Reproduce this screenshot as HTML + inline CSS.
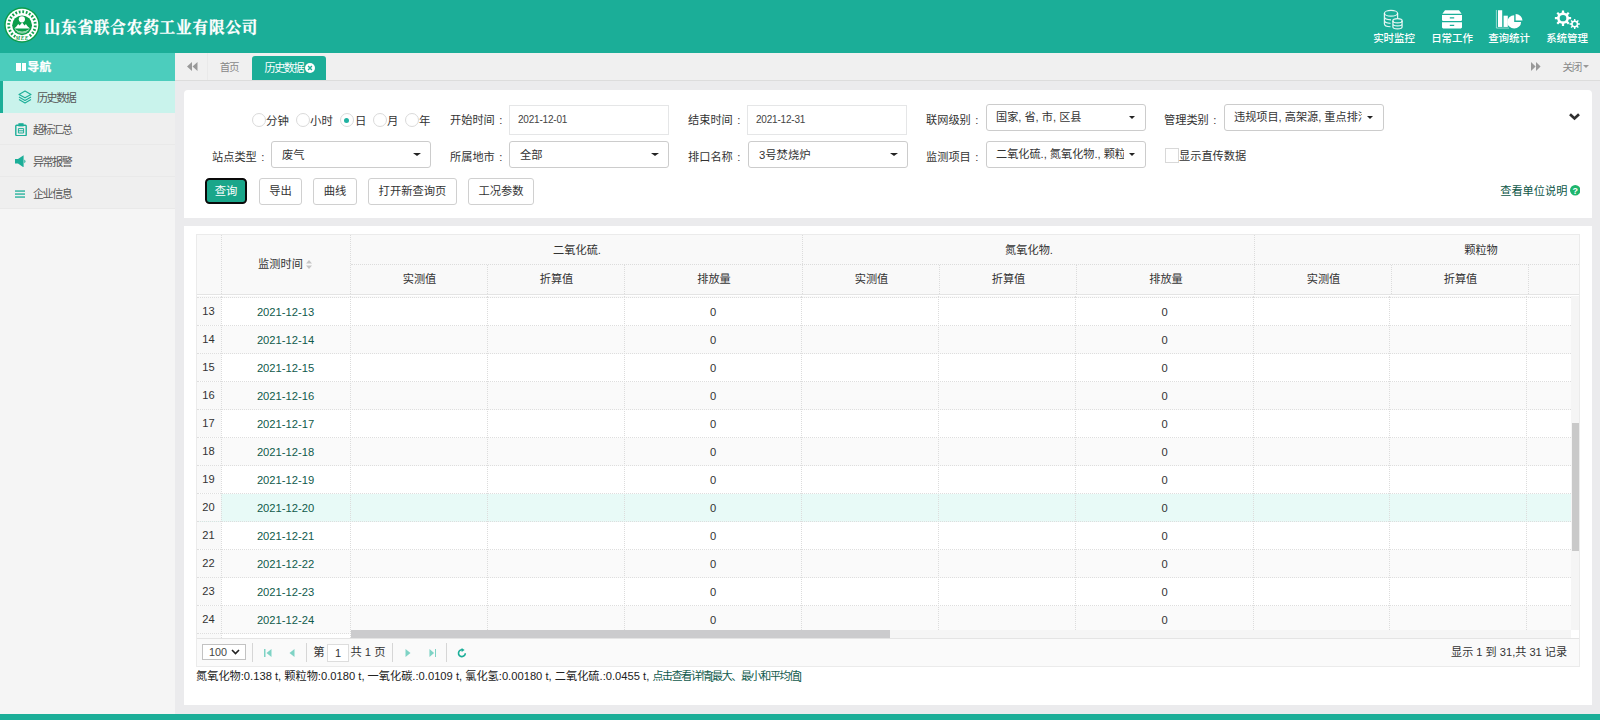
<!DOCTYPE html>
<html lang="zh-CN">
<head>
<meta charset="utf-8">
<title>历史数据</title>
<style>
*{box-sizing:border-box}
html,body{margin:0;padding:0}
body{width:1600px;height:720px;position:relative;overflow:hidden;background:#ebebed;font-family:"Liberation Sans","Noto Sans CJK SC",sans-serif;font-size:11.5px;color:#333}
.abs{position:absolute}
#hdr{position:absolute;left:0;top:0;width:1600px;height:53px;background:#1bae98}
#title{position:absolute;left:44.5px;top:15.6px;font-family:"Liberation Serif","Noto Serif CJK SC",serif;font-weight:700;font-size:15.6px;letter-spacing:.85px;-webkit-text-stroke:.3px #fff;color:#fff;line-height:24px;white-space:nowrap}
.tm{position:absolute;top:0;width:58px;height:53px;text-align:center;color:#fff}
.tm svg{position:absolute;top:9.3px;left:50%;margin-left:-14px;width:28px;height:21px}
.tm span{position:absolute;left:-10px;right:-10px;top:31px;font-size:10.5px;line-height:14px;font-weight:500;letter-spacing:-.1px;white-space:nowrap}
#side{position:absolute;left:0;top:53px;width:175px;height:661px;background:#f5f5f5}
#navh{position:absolute;left:0;top:0;width:175px;height:28px;background:#4ccdbd;color:#fff;font-weight:700;font-size:11px;line-height:28px}
.mi{position:absolute;left:0;width:175px;height:32px;background:#efefef;border-bottom:1px solid #e9e9e9;line-height:35px;font-size:11px;color:#555;letter-spacing:-1.4px}
.mi.on{background:#c9f3ec;border-left:3px solid #1bae98;border-bottom:none;line-height:35px}
.mi svg{position:absolute}
.mi span{position:absolute;left:33px;top:0;white-space:nowrap}
#tabs{position:absolute;left:175px;top:53px;width:1425px;height:28px;background:#f0f0f0;border-bottom:1px solid #dcdcdc}
.panel{position:absolute;left:184px;width:1408px;background:#fff}
.lb{position:absolute;font-size:11.2px;line-height:16px;white-space:nowrap;color:#333;margin-top:-.2px}
.lb b{font-weight:400;margin-left:4.5px}
.inp{position:absolute;height:30px;border:1px solid #e5e6e7;background:#fff;font-size:10px;letter-spacing:-.2px;line-height:28px;padding-left:8px;color:#444}
.sel{position:absolute;height:27px;border:1px solid #ccc;border-radius:3px;background:#fff;font-size:11.3px;line-height:26.5px;padding-left:10px;color:#333;white-space:nowrap;overflow:hidden}
.sel.ms{line-height:24.6px;font-size:11.15px;padding-left:9px}
.sel.ms i{border-left-width:3.3px;border-right-width:3.3px;border-top-width:3.5px;right:10px;top:11px}
.sel u{position:absolute;left:9px;top:0;width:127.5px;overflow:hidden;text-decoration:none;white-space:nowrap}
.sel i{position:absolute;right:9px;top:10.6px;width:0;height:0;border-left:4px solid transparent;border-right:4px solid transparent;border-top:3.8px solid #222}
.btn{position:absolute;top:88px;height:27px;border:1px solid #d0d0d0;border-radius:3px;background:#fff;font-size:11.3px;line-height:25px;text-align:center;color:#333;white-space:nowrap}
.rd{position:absolute;top:23.3px;width:14px;height:14px;border:1px solid #dadada;border-radius:50%;background:#fff;margin-left:-.5px}
.rd.on::after{content:"";position:absolute;left:3.5px;top:3.5px;width:5px;height:5px;border-radius:50%;background:#20b2a2}
/* grid */
#grid{position:absolute;left:12px;top:8px;width:1384px;height:433px;border:1px solid #ebebeb;background:#fff}
#gh{position:absolute;left:0;top:0;width:1382px;height:60px;background:#f9f9f9;border-bottom:1.5px solid #e4e4e4}
.hc{position:absolute;font-size:11.2px;text-align:center;color:#333;line-height:16px;white-space:nowrap}
.vl{position:absolute;width:0;border-left:1px dotted #dcdcdc}
.hl_{position:absolute;height:0;border-top:1px dotted #dcdcdc}
#gb{position:absolute;left:0;top:61px;width:1374px;height:342px;overflow:hidden;background:#fff}
.r{position:absolute;left:0;width:1374px;height:28px;border-bottom:1px dotted #dedede;background:#fff;line-height:28.6px;font-size:11.2px}
.r.alt{background:#fafafa}
.r.hl{background:#e8faf7}
.r span{position:absolute;top:0;text-align:center}
.r .rn{left:0;width:24px;padding-right:1px;background:#f9f9f9;height:27px;color:#333;line-height:26.8px;font-size:11.1px}
.r .dt{left:24px;width:129px;color:#105a4c}
.r .z1{left:427px;width:178px}
.r .z2{left:878.5px;width:178px}
</style>
</head>
<body>
<div id="hdr">
  <svg class="abs" style="left:4px;top:6.5px" width="36" height="36" viewBox="0 0 36 36">
    <circle cx="18" cy="18" r="17.7" fill="#0b9d49"/>
    <circle cx="18" cy="18" r="16.3" fill="#fff"/>
    <circle cx="18" cy="18" r="13.3" fill="none" stroke="#12a04d" stroke-width="2.8" transform="rotate(120 18 18)" pathLength="100" stroke-dasharray="2.1 2.1 2.1 2.1 2.1 2.1 2.1 2.1 2.1 2.1 2.1 2.1 2.1 2.1 2.1 2.1 2.1 2.1 2.1 2.1 2.1 2.1 2.1 2.1 2.1 2.1 2.1 2.1 2.1 2.1 2.1 2.1 2.1 2.1 2.1 2.1 2.1 2.1 2.1 18.1"/>
    <circle cx="18.1" cy="18.3" r="9.9" fill="#0b9d49"/>
    <circle cx="17.9" cy="12.3" r="3.1" fill="#fff"/>
    <path d="M10.2 21.4 L12.4 19.4 L14.2 16.9 L15.6 18.5 L18.2 15.4 L20.5 18.5 L21.9 16.9 L23.7 19.4 L26 21.4 Z" fill="#fff"/>
    <path d="M11 22.6 Q18 27.5 25.2 22.6 M12.8 24.4 Q18 27.8 23.4 24.4" fill="none" stroke="#d9f3e2" stroke-width=".9" opacity=".85"/>
    <text x="18.2" y="32.7" font-family="Liberation Serif,serif" font-size="5.2" font-weight="700" font-style="italic" fill="#0b9d49" text-anchor="middle" letter-spacing=".6">MEE</text>
  </svg>
  <div id="title">山东省联合农药工业有限公司</div>

  <div class="tm" style="left:1365px">
    <svg viewBox="0 0 28 22" preserveAspectRatio="none" fill="none" stroke="#fff" stroke-width="1.25" stroke-opacity=".88" style="margin-left:-15.2px">
      <ellipse cx="12" cy="4.5" rx="6.6" ry="3"/>
      <path d="M5.4 4.5 V15.5 C5.4 17.3 8.2 18.6 11.5 18.6 M18.6 4.5 V9.5 M5.4 8.2 C5.4 10 8.2 11.3 12 11.3 M5.4 11.9 C5.4 13.7 8.2 15 11.5 15"/>
      <ellipse cx="18.5" cy="12.3" rx="4.6" ry="2.2"/>
      <path d="M13.9 12.3 V18.5 C13.9 19.8 15.9 20.8 18.5 20.8 C21.1 20.8 23.1 19.8 23.1 18.5 V12.3 M13.9 15.4 C13.9 16.7 15.9 17.7 18.5 17.7 C21.1 17.7 23.1 16.7 23.1 15.4"/>
    </svg>
    <span>实时监控</span>
  </div>
  <div class="tm" style="left:1423px">
    <svg viewBox="0 0 28 22" preserveAspectRatio="none" fill="#fff">
      <path d="M7 1.3 H21 L23.6 5 H4.4 Z"/>
      <path d="M4 6.2 H24 V11.4 Q24 12.6 22.8 12.6 H5.2 Q4 12.6 4 11.4 Z M11.8 8.6 V9.9 H16.2 V8.6 Z" fill-rule="evenodd"/>
      <path d="M4 14 H24 V19.2 Q24 20.4 22.8 20.4 H5.2 Q4 20.4 4 19.2 Z M11.8 16.4 V17.7 H16.2 V16.4 Z" fill-rule="evenodd"/>
    </svg>
    <span>日常工作</span>
  </div>
  <div class="tm" style="left:1480px">
    <svg viewBox="0 0 28 22" preserveAspectRatio="none" fill="#fff">
      <path d="M1.4 1 V20 H14" fill="none" stroke="#fff" stroke-width=".7" opacity=".8"/>
      <rect x="3" y="1.3" width="4.2" height="17.5"/>
      <rect x="8.6" y="7" width="4.2" height="11.8"/>
      <path d="M19.2 6.6 A6.9 6.9 0 1 0 26.1 13.5 H19.2 Z"/>
      <path d="M20.6 5.2 A6.9 6.9 0 0 1 27.5 12.1 H20.6 Z"/>
    </svg>
    <span>查询统计</span>
  </div>
  <div class="tm" style="left:1538px">
    <svg viewBox="0 0 28 22" preserveAspectRatio="none" fill="none" stroke="#fff">
      <path d="M15.88 8.43 L18.13 8.51 L18.13 10.69 L15.88 10.77 L14.99 12.93 L16.52 14.57 L14.97 16.12 L13.33 14.59 L11.17 15.48 L11.09 17.73 L8.91 17.73 L8.83 15.48 L6.67 14.59 L5.03 16.12 L3.48 14.57 L5.01 12.93 L4.12 10.77 L1.87 10.69 L1.87 8.51 L4.12 8.43 L5.01 6.27 L3.48 4.63 L5.03 3.08 L6.67 4.61 L8.83 3.72 L8.91 1.47 L11.09 1.47 L11.17 3.72 L13.33 4.61 L14.97 3.08 L16.52 4.63 L14.99 6.27 Z M13.30 9.60 A3.3 3.3 0 1 0 6.70 9.60 A3.3 3.3 0 1 0 13.30 9.60 Z" fill="#fff" fill-rule="evenodd" stroke="none"/>
      <path d="M25.33 14.98 L26.85 15.01 L26.85 16.39 L25.33 16.42 L24.78 17.76 L25.83 18.85 L24.85 19.83 L23.76 18.78 L22.42 19.33 L22.39 20.85 L21.01 20.85 L20.98 19.33 L19.64 18.78 L18.55 19.83 L17.57 18.85 L18.62 17.76 L18.07 16.42 L16.55 16.39 L16.55 15.01 L18.07 14.98 L18.62 13.64 L17.57 12.55 L18.55 11.57 L19.64 12.62 L20.98 12.07 L21.01 10.55 L22.39 10.55 L22.42 12.07 L23.76 12.62 L24.85 11.57 L25.83 12.55 L24.78 13.64 Z M23.70 15.70 A2.0 2.0 0 1 0 19.70 15.70 A2.0 2.0 0 1 0 23.70 15.70 Z" fill="#fff" fill-rule="evenodd" stroke="none"/>
    </svg>
    <span>系统管理</span>
  </div>
</div>

<div id="side">
  <div id="navh">
    <span class="abs" style="left:16px;top:10px;width:10px;height:8px;background:#fff"></span>
    <span class="abs" style="left:20.6px;top:10px;width:.8px;height:8px;background:#4ccdbd"></span>
    <span class="abs" style="left:27.6px;top:0;letter-spacing:.3px;font-size:11.6px;-webkit-text-stroke:.25px #fff">导航</span>
  </div>
  <div class="mi on" style="top:28px">
    <svg style="left:14.6px;top:9.4px" width="14" height="14.4" viewBox="0 0 14 14" preserveAspectRatio="none" fill="none" stroke="#1bae98" stroke-width="1.1" stroke-linejoin="round"><path d="M7 1 L13 4.3 L7 7.6 L1 4.3 Z"/><path d="M1 6.8 L7 10.1 L13 6.8 M1 9.3 L7 12.6 L13 9.3"/></svg>
    <span style="left:34px">历史数据</span>
  </div>
  <div class="mi" style="top:60px">
    <svg style="left:15px;top:9.6px" width="12" height="13.4" viewBox="0 0 12 13.4" fill="none" stroke="#1bae98" stroke-width="1.4"><rect x=".8" y="2.3" width="10.4" height="10.3" rx=".8"/><path d="M3.4 .2 H8.6 V3.4 H3.4 Z" fill="#1bae98" stroke="none"/><path d="M3.4 5.6 H8.6 V10 H3.4 Z M3.4 7.8 H8.6" stroke-width="1"/></svg>
    <span>超标汇总</span>
  </div>
  <div class="mi" style="top:92px">
    <svg style="left:15px;top:9.8px" width="12" height="12.6" viewBox="0 0 12 12" preserveAspectRatio="none" fill="#1bae98"><path d="M0 3.8 H3 L8.6 0.2 V11.8 L3 8.2 H0 Z"/><path d="M9.3 4.2 Q11.8 6 9.3 7.8 Z"/></svg>
    <span>异常报警</span>
  </div>
  <div class="mi" style="top:124px">
    <svg style="left:15px;top:13px" width="11" height="9" viewBox="0 0 11 9" fill="#1bae98"><rect y=".4" width="10" height="1.3"/><rect y="3.4" width="10" height="1.3"/><rect y="6.4" width="10" height="1.3"/></svg>
    <span>企业信息</span>
  </div>
</div>

<div id="tabs">
  <div class="abs" style="left:0;top:0;width:33px;height:27px;border-right:1px solid #e9e9e9"></div>
  <svg class="abs" style="left:12px;top:9px" width="11" height="9" viewBox="0 0 11 9" fill="#999"><path d="M5 0 V9 L0 4.5 Z M10.5 0 V9 L5.5 4.5 Z"/></svg>
  <div class="abs" style="left:44.7px;top:0;font-size:10.5px;line-height:29.6px;color:#888;letter-spacing:-1.1px">首页</div>
  <div class="abs" style="left:77px;top:3px;width:74px;height:24px;background:#1bae98;border-radius:3px 3px 0 0;color:#fff;font-size:11px;line-height:25px;letter-spacing:-1.35px"><span class="abs" style="left:12.5px;top:0;white-space:nowrap">历史数据</span>
    <svg class="abs" style="left:53.3px;top:7.4px" width="10" height="10" viewBox="0 0 9 9"><circle cx="4.5" cy="4.5" r="4.5" fill="#fff"/><path d="M2.8 2.8 L6.2 6.2 M6.2 2.8 L2.8 6.2" stroke="#1bae98" stroke-width="1.3"/></svg>
  </div>
  <svg class="abs" style="left:1356px;top:9px" width="10" height="9" viewBox="0 0 10 9" fill="#999"><path d="M0 0 V9 L4.6 4.5 Z M5 0 V9 L9.6 4.5 Z"/></svg>
  <div class="abs" style="left:1387.5px;top:0;font-size:10.6px;line-height:29.4px;color:#888;letter-spacing:-1.3px">关闭</div>
  <span class="abs" style="left:1408.3px;top:12px;width:0;height:0;border-left:3.3px solid transparent;border-right:3.3px solid transparent;border-top:3.5px solid #999"></span>
</div>

<!-- filter panel -->
<div class="panel" style="top:90px;height:128px;border-radius:4px 4px 0 0">
  <span class="rd" style="left:68px"></span><span class="lb" style="left:82px;top:23.2px;font-size:11.4px">分钟</span>
  <span class="rd" style="left:112px"></span><span class="lb" style="left:126px;top:23.2px;font-size:11.4px">小时</span>
  <span class="rd on" style="left:156px"></span><span class="lb" style="left:171px;top:23.2px;font-size:11.4px">日</span>
  <span class="rd" style="left:189px"></span><span class="lb" style="left:203px;top:23.2px;font-size:11.4px">月</span>
  <span class="rd" style="left:221px"></span><span class="lb" style="left:235px;top:23.2px;font-size:11.4px">年</span>

  <span class="lb" style="left:266px;top:22px">开始时间<b>:</b></span>
  <div class="inp" style="left:325px;top:15px;width:160px">2021-12-01</div>
  <span class="lb" style="left:504px;top:22px">结束时间<b>:</b></span>
  <div class="inp" style="left:563px;top:15px;width:160px">2021-12-31</div>
  <span class="lb" style="left:742px;top:22px">联网级别<b>:</b></span>
  <div class="sel ms" style="left:802px;top:14px;width:160px">国家, 省, 市, 区县<i></i></div>
  <span class="lb" style="left:980px;top:22px">管理类别<b>:</b></span>
  <div class="sel ms" style="left:1040px;top:14px;width:160px"><u>违规项目, 高架源, 重点排污</u><i></i></div>

  <span class="lb" style="left:28px;top:59px">站点类型<b>:</b></span>
  <div class="sel" style="left:87px;top:51px;width:160px">废气<i></i></div>
  <span class="lb" style="left:266px;top:59px">所属地市<b>:</b></span>
  <div class="sel" style="left:325px;top:51px;width:160px">全部<i></i></div>
  <span class="lb" style="left:504px;top:59px">排口名称<b>:</b></span>
  <div class="sel" style="left:564px;top:51px;width:160px">3号焚烧炉<i></i></div>
  <span class="lb" style="left:742px;top:59px">监测项目<b>:</b></span>
  <div class="sel ms" style="left:802px;top:51px;width:160px"><u>二氧化硫., 氮氧化物., 颗粒物</u><i></i></div>
  <span class="abs" style="left:981px;top:58px;width:14px;height:14.6px;border:1px solid #d8d8d8;background:#fff"></span>
  <span class="lb" style="left:995px;top:58px;font-size:11.2px">显示直传数据</span>

  <div class="btn" style="left:21.2px;top:88.3px;width:41.8px;height:26.2px;background:#1aa68a;color:#fff;border:2px solid #0a0a0a;border-radius:4.5px;line-height:22.4px">查询</div>
  <div class="btn" style="left:75px;width:43px">导出</div>
  <div class="btn" style="left:129px;width:44px">曲线</div>
  <div class="btn" style="left:184px;width:89px">打开新查询页</div>
  <div class="btn" style="left:284px;width:66px">工况参数</div>

  <svg class="abs" style="left:1385px;top:23px" width="11" height="8" viewBox="0 0 11 8" fill="none" stroke="#2f2f2f" stroke-width="2.7"><path d="M1 1.2 L5.5 5.4 L10 1.2"/></svg>
  <span class="lb" style="left:1316.2px;top:93.2px;color:#0d5648;font-size:11.2px">查看单位说明</span>
  <svg class="abs" style="left:1385.5px;top:95px" width="10.5" height="10.5" viewBox="0 0 10 10"><circle cx="5" cy="5" r="5" fill="#1db56c"/><text x="5" y="8.2" font-family="Liberation Sans,sans-serif" font-size="8.5" font-weight="700" fill="#fff" text-anchor="middle">?</text></svg>
</div>

<!-- grid panel -->
<div class="panel" style="top:226px;height:479px">
  <div id="grid">
    <div id="gh">
      <div class="hc" style="left:23.5px;top:21.2px;width:129px">监测时间 <svg width="6" height="9" viewBox="0 0 6 9" style="vertical-align:-1px"><path d="M3 0 L6 3.6 H0 Z M3 9 L6 5.4 H0 Z" fill="#c5c5c5"/></svg></div>
      <div class="hc" style="left:154px;top:7px;width:452px">二氧化硫.</div>
      <div class="hc" style="left:606px;top:7px;width:452px">氮氧化物.</div>
      <div class="hc" style="left:1058px;top:7px;width:452px">颗粒物</div>
      <div class="hc" style="left:154px;top:36.4px;width:137px">实测值</div>
      <div class="hc" style="left:291px;top:36.4px;width:137px">折算值</div>
      <div class="hc" style="left:428px;top:36.4px;width:178px">排放量</div>
      <div class="hc" style="left:606px;top:36.4px;width:137px">实测值</div>
      <div class="hc" style="left:743px;top:36.4px;width:137px">折算值</div>
      <div class="hc" style="left:880px;top:36.4px;width:178px">排放量</div>
      <div class="hc" style="left:1058px;top:36.4px;width:137px">实测值</div>
      <div class="hc" style="left:1195px;top:36.4px;width:137px">折算值</div>
      <div class="hl_" style="left:154px;top:29px;width:1228px"></div>
      <div class="vl" style="left:24px;top:0;height:59px"></div>
      <div class="vl" style="left:153px;top:0;height:59px"></div>
      <div class="vl" style="left:290px;top:30px;height:29px"></div>
      <div class="vl" style="left:427px;top:30px;height:29px"></div>
      <div class="vl" style="left:605px;top:0;height:59px"></div>
      <div class="vl" style="left:742px;top:30px;height:29px"></div>
      <div class="vl" style="left:879px;top:30px;height:29px"></div>
      <div class="vl" style="left:1057px;top:0;height:59px"></div>
      <div class="vl" style="left:1194px;top:30px;height:29px"></div>
      <div class="vl" style="left:1331px;top:30px;height:29px"></div>
    </div>
    <div id="gb">
<div class="r alt" style="top:-25.75px"><span class="rn">12</span><span class="dt">2021-12-12</span><span class="z z1">0</span><span class="z z2">0</span></div>
<div class="r" style="top:2.2px"><span class="rn">13</span><span class="dt">2021-12-13</span><span class="z z1">0</span><span class="z z2">0</span></div>
<div class="r alt" style="top:30.15px"><span class="rn">14</span><span class="dt">2021-12-14</span><span class="z z1">0</span><span class="z z2">0</span></div>
<div class="r" style="top:58.1px"><span class="rn">15</span><span class="dt">2021-12-15</span><span class="z z1">0</span><span class="z z2">0</span></div>
<div class="r alt" style="top:86.05px"><span class="rn">16</span><span class="dt">2021-12-16</span><span class="z z1">0</span><span class="z z2">0</span></div>
<div class="r" style="top:114.0px"><span class="rn">17</span><span class="dt">2021-12-17</span><span class="z z1">0</span><span class="z z2">0</span></div>
<div class="r alt" style="top:141.95px"><span class="rn">18</span><span class="dt">2021-12-18</span><span class="z z1">0</span><span class="z z2">0</span></div>
<div class="r" style="top:169.9px"><span class="rn">19</span><span class="dt">2021-12-19</span><span class="z z1">0</span><span class="z z2">0</span></div>
<div class="r alt hl" style="top:197.85px"><span class="rn">20</span><span class="dt">2021-12-20</span><span class="z z1">0</span><span class="z z2">0</span></div>
<div class="r" style="top:225.8px"><span class="rn">21</span><span class="dt">2021-12-21</span><span class="z z1">0</span><span class="z z2">0</span></div>
<div class="r alt" style="top:253.75px"><span class="rn">22</span><span class="dt">2021-12-22</span><span class="z z1">0</span><span class="z z2">0</span></div>
<div class="r" style="top:281.7px"><span class="rn">23</span><span class="dt">2021-12-23</span><span class="z z1">0</span><span class="z z2">0</span></div>
<div class="r alt" style="top:309.65px"><span class="rn">24</span><span class="dt">2021-12-24</span><span class="z z1">0</span><span class="z z2">0</span></div>
<div class="r" style="top:337.6px"><span class="rn">25</span><span class="dt">2021-12-25</span><span class="z z1">0</span><span class="z z2">0</span></div>
      <div class="vl" style="left:24px;top:0;height:342px"></div>
      <div class="vl" style="left:153px;top:0;height:342px"></div>
      <div class="vl" style="left:290px;top:0;height:342px"></div>
      <div class="vl" style="left:427px;top:0;height:342px"></div>
      <div class="vl" style="left:604px;top:0;height:342px"></div>
      <div class="vl" style="left:741px;top:0;height:342px"></div>
      <div class="vl" style="left:878px;top:0;height:342px"></div>
      <div class="vl" style="left:1056px;top:0;height:342px"></div>
      <div class="vl" style="left:1192px;top:0;height:342px"></div>
      <div class="vl" style="left:1329px;top:0;height:342px"></div>
    </div>
    <!-- v scrollbar -->
    <div class="abs" style="left:1374px;top:61px;width:8px;height:334px;background:#f5f5f5"></div>
    <div class="abs" style="left:1374px;top:395px;width:8px;height:8px;background:#fff"></div>
    <div class="abs" style="left:1375px;top:188px;width:7px;height:128px;background:#c9c9c9"></div>
    <!-- h scrollbar -->
    <div class="abs" style="left:154px;top:395px;width:1220px;height:8px;background:#f5f5f5"></div>
    <div class="abs" style="left:154px;top:395.3px;width:538.5px;height:8px;background:#cbcbcd"></div>
    <!-- pager -->
    <div class="abs" style="left:0;top:403px;width:1382px;height:28px;background:#fafafa;border-top:1px solid #e4e4e4"></div>
    <div class="abs" style="left:5px;top:409px;width:44px;height:16px;border:1px solid #c2c2c2;background:#fff;font-size:10.8px;line-height:14px;padding-left:6px;color:#444">100<svg class="abs" style="left:28px;top:4px" width="9" height="6" viewBox="0 0 9 6" fill="none" stroke="#222" stroke-width="1.6"><path d="M1 1 L4.5 4.5 L8 1"/></svg></div>
    <div class="abs" style="left:55px;top:408px;width:1px;height:19px;background:#d6d6d6"></div>
    <svg class="abs" style="left:67px;top:414px" width="8" height="8" viewBox="0 0 8 8" fill="#7fd3c5"><rect x="0" y="0" width="1.5" height="8"/><path d="M7.5 0 V8 L2.5 4 Z"/></svg>
    <svg class="abs" style="left:92px;top:414px" width="6" height="8" viewBox="0 0 6 8" fill="#7fd3c5"><path d="M5.5 0 V8 L.5 4 Z"/></svg>
    <div class="abs" style="left:109px;top:408px;width:1px;height:19px;background:#d6d6d6"></div>
    <div class="abs" style="left:116.3px;top:409px;font-size:11.3px;line-height:16px;color:#333">第</div>
    <div class="abs" style="left:130px;top:409px;width:22px;height:18px;border:1px solid #ddd;background:#fff;font-size:11px;line-height:16px;text-align:center">1</div>
    <div class="abs" style="left:153.4px;top:409px;font-size:11.3px;line-height:16px;color:#333;white-space:nowrap">共 1 页</div>
    <div class="abs" style="left:195px;top:408px;width:1px;height:19px;background:#d6d6d6"></div>
    <svg class="abs" style="left:208px;top:414px" width="6" height="8" viewBox="0 0 6 8" fill="#7fd3c5"><path d="M.5 0 V8 L5.5 4 Z"/></svg>
    <svg class="abs" style="left:231.7px;top:414px" width="7.4" height="8" preserveAspectRatio="none" viewBox="0 0 8 8" fill="#7fd3c5"><rect x="6.5" y="0" width="1.5" height="8"/><path d="M.5 0 V8 L5.5 4 Z"/></svg>
    <div class="abs" style="left:249px;top:408px;width:1px;height:19px;background:#d6d6d6"></div>
    <svg class="abs" style="left:260px;top:413px" width="10" height="10" viewBox="0 0 10 10" fill="none" stroke="#1bae98" stroke-width="1.6"><path d="M8.3 5.2 A3.4 3.4 0 1 1 5.6 1.9"/><path d="M4.6 0 L7.6 1.9 L4.6 3.9 Z" fill="#1bae98" stroke="none"/></svg>
    <div class="abs" style="right:12px;top:408.5px;font-size:11.1px;line-height:16px;color:#333;white-space:nowrap">显示 1 到 31,共 31 记录</div>
  </div>
  <div class="abs" style="left:12px;top:442px;font-size:11.2px;line-height:16px;white-space:nowrap;color:#222">氮氧化物:0.138 t, 颗粒物:0.0180 t, 一氧化碳.:0.0109 t, 氯化氢:0.00180 t, 二氧化硫.:0.0455 t, <span style="color:#105a4c;font-size:11px;letter-spacing:-1.35px">点击查看详情[最大、最小和平均值]</span></div>
</div>

<div class="abs" style="left:0;top:714px;width:1600px;height:6px;background:#1bae98"></div>
</body>
</html>
